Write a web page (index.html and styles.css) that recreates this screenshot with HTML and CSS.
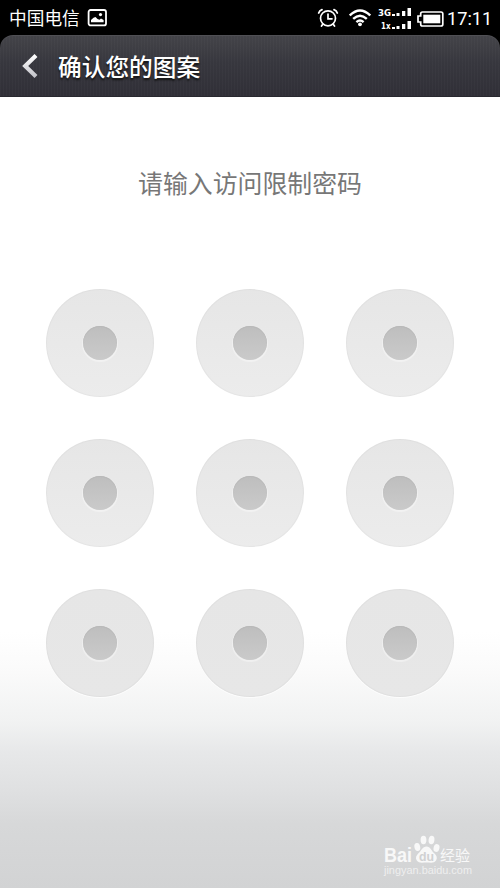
FILE: index.html
```html
<!DOCTYPE html>
<html lang="zh-CN">
<head>
<meta charset="utf-8">
<title>确认您的图案</title>
<link rel="stylesheet" href="styles.css">
</head>
<body>
<div class="screen">
  <div class="status">
    <span class="carrier">中国电信</span>
    <svg class="photo" width="20" height="18" viewBox="0 0 20 18">
      <rect x="1.6" y="1" width="17.4" height="15.4" rx="2" fill="none" stroke="#fff" stroke-width="1.8"/>
      <path d="M4 13.300V11L6.500 8.700 8.500 8 10.500 10l2 .8 1.500-1.300 2.600 1.500V13.300Z" fill="#fff"/>
      <circle cx="13.500" cy="5.600" r="1.600" fill="#fff"/>
    </svg>
    <svg class="alarm" width="22" height="20" viewBox="0 0 22 20">
      <g fill="none" stroke="#fff" stroke-linecap="round">
        <circle cx="11" cy="10.300" r="7.500" stroke-width="1.700"/>
        <path d="M11 6v4.800h4" stroke-width="1.700"/>
        <path d="M1.700 5Q2.500 2.500 5 1.700M20.300 5Q19.500 2.500 17 1.700M5.800 16.300 4.500 18M16.200 16.300l1.300 1.700" stroke-width="1.800"/>
      </g>
    </svg>
    <svg class="wifi" width="22" height="18" viewBox="0 0 22 18">
      <g fill="none" stroke="#fff" stroke-width="2.400">
        <path d="M.8 6.500Q11-3.300 21.200 6.500M4.200 9.900Q11 3.500 17.800 9.900M7.400 13.100Q11 9.900 14.600 13.100"/>
      </g>
      <circle cx="11" cy="15.300" r="1.900" fill="#fff"/>
    </svg>
    <svg class="signal" width="34" height="22" viewBox="0 0 34 22">
      <text class="net" x="0" y="8" textLength="13" lengthAdjust="spacingAndGlyphs">3G</text>
      <text class="net" x="3" y="21" textLength="9.500" lengthAdjust="spacingAndGlyphs">1x</text>
      <path d="M14 6h3v2h-3zM18.500 5h3v3h-3zM24 3h3.300v5H24zM29.500 0h3.500v8h-3.500zM14 19h3v2h-3zM18.500 18h3v3h-3zM24 16h3.300v5H24zM29.500 13h3.500v8h-3.500z" fill="#fff"/>
    </svg>
    <svg class="battery" width="27" height="16" viewBox="0 0 27 16">
      <path d="M5.500 1H24q1.800 0 1.800 1.800v10.400Q25.800 15 24 15H5.500q-1.800 0-1.800-1.800V11H1V5h2.700V2.800Q3.700 1 5.500 1Z" fill="none" stroke="#fff" stroke-width="1.700"/>
      <path d="M6.300 3.700h17v8.600h-17z" fill="#fff"/>
    </svg>
    <span class="time">17:11</span>
  </div>
  <header class="bar">
    <svg class="back" width="18" height="28" viewBox="0 0 18 28">
      <defs><linearGradient id="g" x2="0" y2="1"><stop stop-color="#fff"/><stop offset="1" stop-color="#c4c4ca"/></linearGradient></defs>
      <path d="M16 3.500 5.200 14 16 24.500" fill="none" stroke="url(#g)" stroke-width="4.200"/>
    </svg>
    <h1>确认您的图案</h1>
  </header>
  <main class="content">
    <p class="prompt">请输入访问限制密码</p>
    <div class="grid">
      <i class="node"></i><i class="node"></i><i class="node"></i>
      <i class="node"></i><i class="node"></i><i class="node"></i>
      <i class="node"></i><i class="node"></i><i class="node"></i>
    </div>
  </main>
  <div class="mark">
    <svg width="92" height="46" viewBox="0 0 92 46">
      <g fill="#f8f8f8">
        <text class="bai" x="1" y="28" textLength="28" lengthAdjust="spacingAndGlyphs">Bai</text>
        <ellipse cx="34.300" cy="13" rx="2.900" ry="4" transform="rotate(-12 34.300 13)"/>
        <ellipse cx="40.500" cy="6" rx="2.900" ry="4.200"/>
        <ellipse cx="48.500" cy="6" rx="2.900" ry="4.200" transform="rotate(8 48.500 6)"/>
        <ellipse cx="53.500" cy="14" rx="2.900" ry="4" transform="rotate(15 53.500 14)"/>
        <path d="M43.500 12.500c4 0 5 4.500 7.500 6.500 3 2.500 3.500 5 2 7.500-1.800 3-5.500 2-9.500 2s-7.700 1-9.700-2c-1.600-2.500-.8-5 1.900-7.500 2.500-2 3.800-6.500 7.800-6.500Z"/>
        <text class="exp" x="57" y="27" textLength="30" lengthAdjust="spacingAndGlyphs">经验</text>
        <text class="url" x="1" y="40" textLength="88" lengthAdjust="spacingAndGlyphs">jingyan.baidu.com</text>
      </g>
      <text class="du" x="36" y="26.500" textLength="15" lengthAdjust="spacingAndGlyphs">du</text>
    </svg>
  </div>
</div>
</body>
</html>
```
FILE: styles.css
```css
* { box-sizing: border-box; }
body {
  margin: 0;
  background: #000;
  font-family: "Noto Sans CJK SC", sans-serif;
}
.screen {
  position: relative;
  width: 500px;
  height: 888px;
  overflow: hidden;
  display: flex;
  flex-direction: column;
}
.status {
  display: flex;
  align-items: center;
  height: 35px;
  padding: 0 0 0 9px;
  color: #fff;
  background: #000;
  white-space: nowrap;
}
.status > * { flex-shrink: 0; }
.carrier { width: 78px; font-size: 17.700px; line-height: 35px; }
.alarm { margin-left: 210px; }
.wifi { margin-left: 10px; }
.signal { margin-left: 7px; margin-top: 3px; }
.battery { margin-left: 5px; margin-top: 3px; }
.time {
  margin-left: 3px;
  padding-top: 2px;
  font: 400 18.200px/35px Roboto, sans-serif;
}
.net { font: 700 9.500px "DejaVu Sans", sans-serif; fill: #fff; }
.bar {
  display: flex;
  align-items: center;
  height: 62px;
  padding-left: 20px;
  border-radius: 13px 13px 0 0;
  background: repeating-linear-gradient(90deg, rgba(255,255,255,.018) 0 1px, transparent 1px 3px), linear-gradient(#444449, #37373e 45%, #302f37);
  box-shadow: inset 0 1px #505055, inset 0 -1px #28282f;
}
h1 {
  margin: 0 0 0 20px;
  color: #fff;
  font-size: 23.700px;
  line-height: 36px;
  font-weight: 500;
  text-shadow: 0 2px 2px #111;
}
.content {
  flex: 1;
  background: linear-gradient(#fff 0, #fff 535px, #fbfbfb 570px, #f1f2f2 625px, #e7e8e9 655px, #e0e1e2 690px, #d7d8d9 727px, #d2d3d4 791px);
}
.prompt {
  margin: 65px 0 0;
  height: 40px;
  color: #777;
  font-size: 24.900px;
  line-height: 40px;
  text-align: center;
}
.grid {
  display: grid;
  grid-template-columns: repeat(3, 108px);
  grid-auto-rows: 108px;
  gap: 42px;
  justify-content: center;
  margin-top: 87px;
}
.node {
  display: grid;
  place-items: center;
  border-radius: 50%;
  background: linear-gradient(#e6e6e6, #ececec);
  box-shadow: inset 0 0 1px 1px rgba(0,0,0,.03), 0 1px 1px rgba(255,255,255,.8);
}
.node::before {
  content: "";
  width: 34px;
  height: 34px;
  border-radius: 50%;
  background: linear-gradient(#bebebe, #cacaca);
  box-shadow: 0 1px 1px 1px rgba(255,255,255,.4), inset 0 1px 1px #b8b8b8;
}
.grid .node:nth-child(n+7) { background: linear-gradient(#e6e6e6, #e7e7e7); }
.mark {
  position: absolute;
  left: 383px;
  top: 834px;
}
.bai { font: 700 20px "Liberation Sans", sans-serif; }
.du { font: 700 13px "Liberation Sans", sans-serif; fill: #d0d1d2; }
.exp { font: 400 15px "Noto Sans CJK SC", sans-serif; }
.url { font: 400 10.500px "Liberation Sans", sans-serif; opacity: .75; }
```
